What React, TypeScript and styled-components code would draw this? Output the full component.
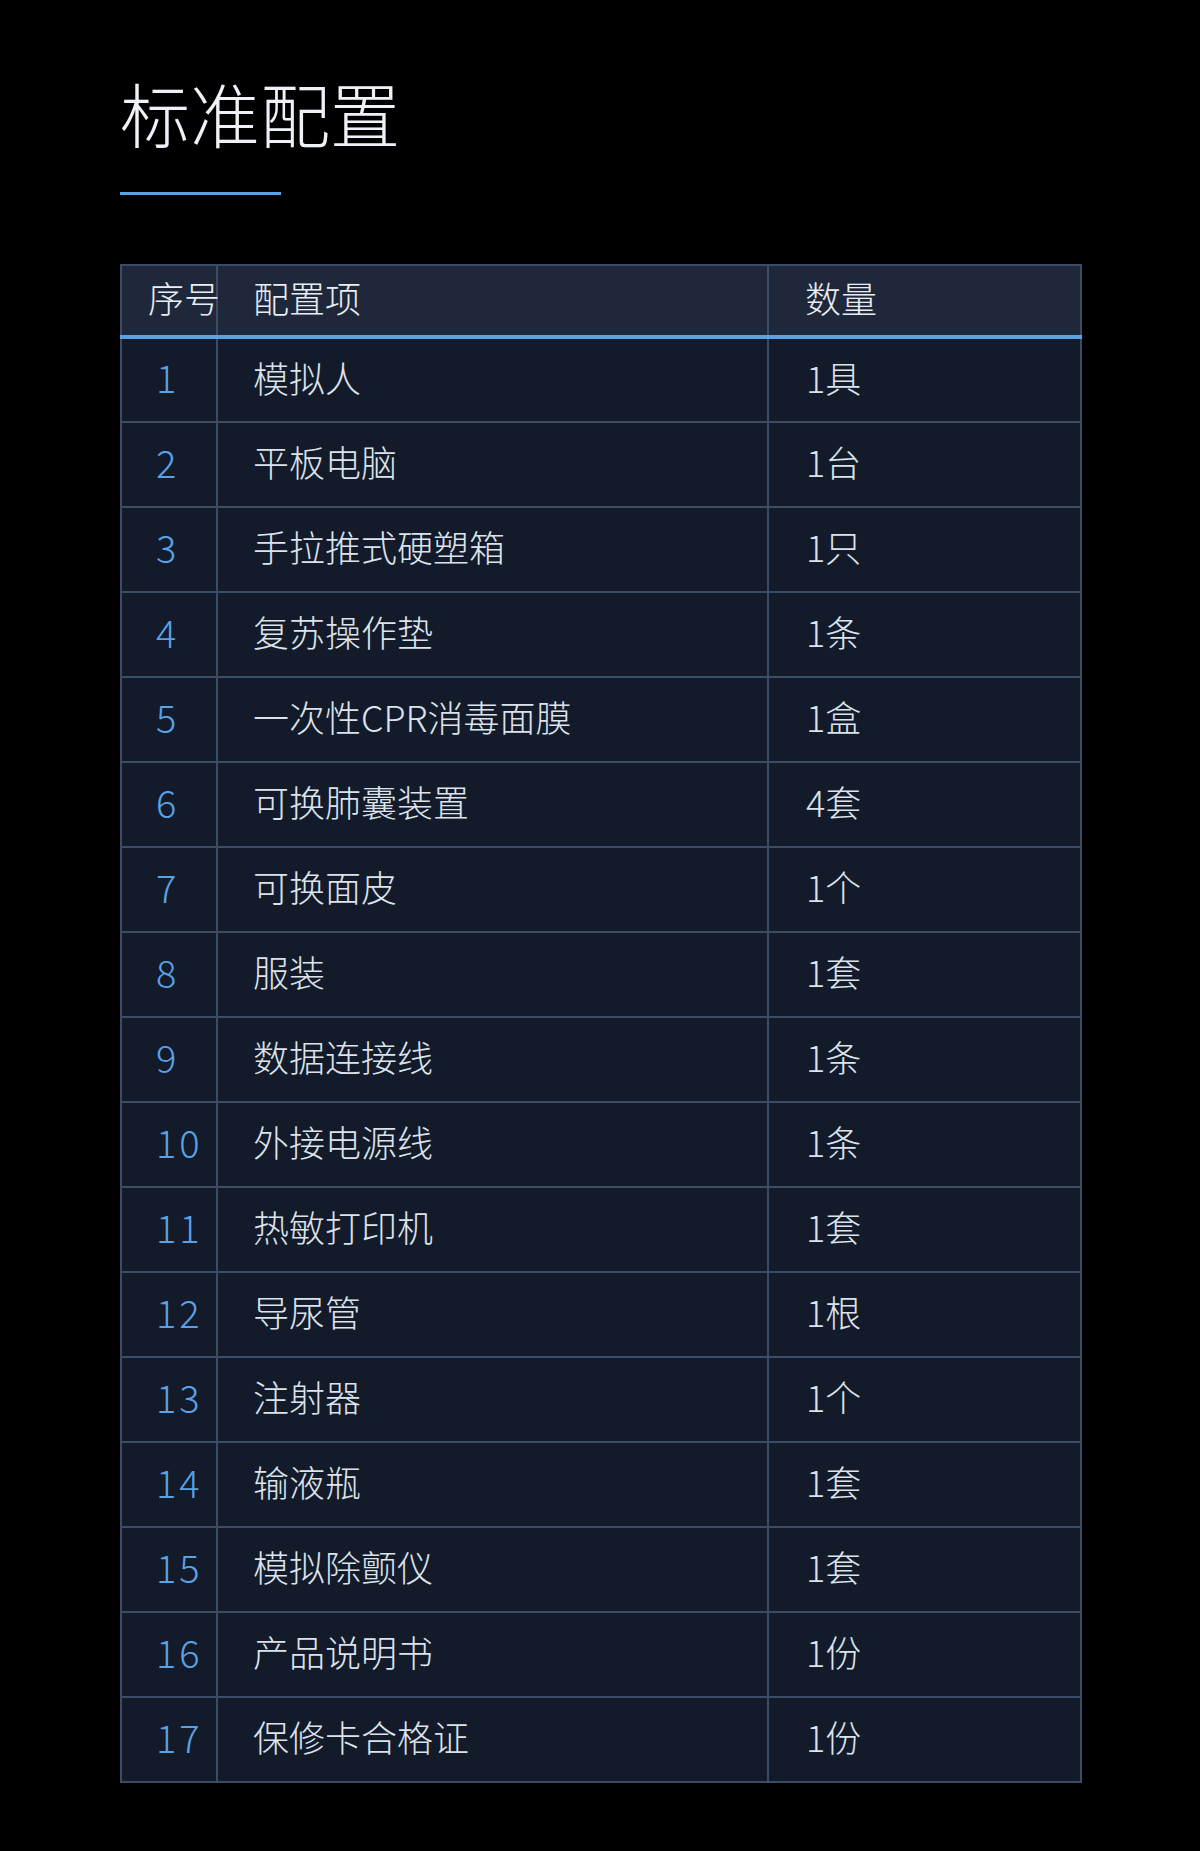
import React from "react";
import styled, { createGlobalStyle } from "styled-components";

const Global = createGlobalStyle`
  html, body { margin: 0; padding: 0; background: #000; }
  body { font-family: "Noto Sans CJK SC", "Noto Sans", sans-serif; }
`;

const Page = styled.div`
  width: 1200px;
  min-height: 1851px;
  box-sizing: border-box;
  padding: 70px 120px 0 120px;
  background: #000;
`;

const Title = styled.h1`
  margin: 0;
  font-size: 70px;
  line-height: 86px;
  font-weight: 300;
  color: #eef1f7;
  letter-spacing: 0;
`;

const TitleBar = styled.div`
  width: 161px;
  height: 3px;
  margin-top: 36px;
  background: #5aa2e6;
`;

const Table = styled.table`
  margin-top: 69px;
  width: 960px;
  border-collapse: collapse;
  table-layout: fixed;
  border: 2px solid #3a4c66;
`;

const HeadRow = styled.tr`
  background: #1e283a;
  height: 72px;
  border-bottom: 4px solid #5aa2e6;
`;

const Th = styled.th<{ $pad: number }>`
  padding: 0 0 7px ${(p) => p.$pad}px;
  text-align: left;
  font-size: 36px;
  font-weight: 300;
  color: #e9edf4;
  white-space: nowrap;
  overflow: visible;
  border-right: 2px solid #3a4c66;
  &:last-child { border-right: none; }
`;

const Row = styled.tr`
  background: #131b2a;
  height: 85px;
  border-top: 2px solid #3a4c66;
  &:first-of-type { border-top: none; }
`;

const Td = styled.td<{ $pad: number }>`
  padding: 0 0 7px ${(p) => p.$pad}px;
  font-size: 36px;
  font-weight: 300;
  color: #dde3ec;
  white-space: nowrap;
  border-right: 2px solid #3a4c66;
  &:last-child { border-right: none; }
`;

const NumCell = styled(Td)`
  font-size: 38px;
  letter-spacing: 3px;
  color: #5aa2e6;
`;

const rows: [string, string][] = [
  ["模拟人", "1具"],
  ["平板电脑", "1台"],
  ["手拉推式硬塑箱", "1只"],
  ["复苏操作垫", "1条"],
  ["一次性CPR消毒面膜", "1盒"],
  ["可换肺囊装置", "4套"],
  ["可换面皮", "1个"],
  ["服装", "1套"],
  ["数据连接线", "1条"],
  ["外接电源线", "1条"],
  ["热敏打印机", "1套"],
  ["导尿管", "1根"],
  ["注射器", "1个"],
  ["输液瓶", "1套"],
  ["模拟除颤仪", "1套"],
  ["产品说明书", "1份"],
  ["保修卡合格证", "1份"],
];

export default function App() {
  return (
    <Page>
      <Global />
      <Title>标准配置</Title>
      <TitleBar />
      <Table>
        <colgroup>
          <col style={{ width: 96 }} />
          <col style={{ width: 551 }} />
          <col style={{ width: 313 }} />
        </colgroup>
        <thead>
          <HeadRow>
            <Th $pad={26}>序号</Th>
            <Th $pad={35}>配置项</Th>
            <Th $pad={36}>数量</Th>
          </HeadRow>
        </thead>
        <tbody>
          {rows.map(([name, qty], i) => (
            <Row key={i}>
              <NumCell $pad={34}>{i + 1}</NumCell>
              <Td $pad={35}>{name}</Td>
              <Td $pad={37}>{qty}</Td>
            </Row>
          ))}
        </tbody>
      </Table>
    </Page>
  );
}
